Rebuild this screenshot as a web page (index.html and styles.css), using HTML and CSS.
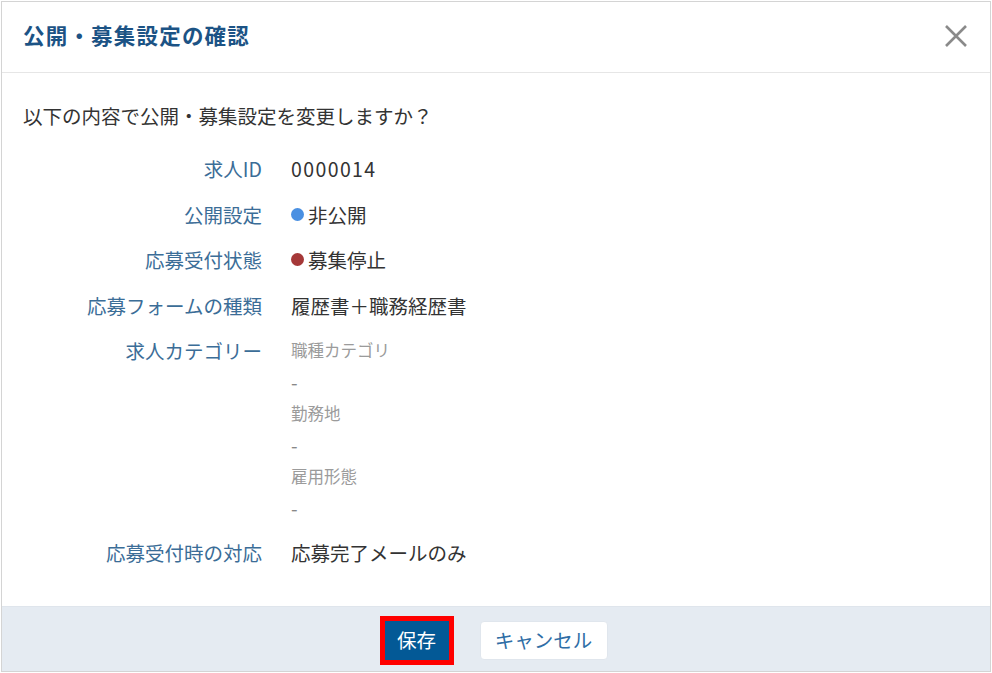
FILE: index.html
```html
<!DOCTYPE html>
<html lang="ja">
<head>
<meta charset="utf-8">
<link rel="stylesheet" href="styles.css">
</head>
<body>
<div class="modal">
  <div class="modal-header">
    <h1 class="title">公開・募集設定の確認</h1>
    <button class="close" aria-label="閉じる">
      <svg width="24" height="24" viewBox="0 0 24 24"><path d="M2 2 L22 22 M22 2 L2 22" stroke="#8a8a8a" stroke-width="2.6" fill="none"/></svg>
    </button>
  </div>
  <div class="modal-body">
    <p class="intro">以下の内容で公開・募集設定を変更しますか？</p>
    <dl class="details">
      <div class="row"><dt>求人ID</dt><dd class="num">0000014</dd></div>
      <div class="row"><dt>公開設定</dt><dd><span class="dot dot-blue"></span>非公開</dd></div>
      <div class="row"><dt>応募受付状態</dt><dd><span class="dot dot-red"></span>募集停止</dd></div>
      <div class="row"><dt>応募フォームの種類</dt><dd>履歴書＋職務経歴書</dd></div>
      <div class="row"><dt>求人カテゴリー</dt><dd class="cats">
        <span class="cat">職種カテゴリ</span>
        <span class="cat dash">-</span>
        <span class="cat">勤務地</span>
        <span class="cat dash">-</span>
        <span class="cat">雇用形態</span>
        <span class="cat dash">-</span>
      </dd></div>
      <div class="row"><dt>応募受付時の対応</dt><dd>応募完了メールのみ</dd></div>
    </dl>
  </div>
  <div class="modal-footer">
    <button class="btn btn-save">保存</button>
    <button class="btn btn-cancel">キャンセル</button>
  </div>
</div>
</body>
</html>
```
FILE: styles.css
```css
* { box-sizing: border-box; }
html, body { margin: 0; padding: 0; background: #fff; }
body { padding: 1px; font-family: "Noto Sans CJK JP", "Noto Sans", sans-serif; }
.modal {
  width: 990px;
  height: 671px;
  border: 1px solid #d4d4d4;
  display: flex;
  flex-direction: column;
  background: #fff;
}
.modal-header {
  height: 71px;
  border-bottom: 1px solid #e6e6e6;
  display: flex;
  align-items: center;
  justify-content: space-between;
  padding: 0 22px 5px 21px;
}
.title {
  margin: 0;
  font-size: 21.5px;
  letter-spacing: 1.2px;
  font-weight: 700;
  color: #1c5385;
  line-height: 1;
}
.close {
  border: 0;
  background: none;
  padding: 0;
  width: 24px;
  height: 24px;
  display: flex;
  margin-top: 3px;
}
.modal-body {
  flex: 1;
  padding: 27px 21px 0 21px;
}
.intro {
  margin: 0 0 22px 0;
  font-size: 19.5px;
  line-height: 31.4px;
  color: #333;
}
.details { margin: 0; display: flex; flex-direction: column; gap: 14px; }
.row { display: grid; grid-template-columns: 240px 1fr; column-gap: 28px; }
dt {
  text-align: right;
  font-size: 19.5px;
  line-height: 31.4px;
  color: #3b6d97;
  padding-right: 1px;
}
dd {
  margin: 0;
  font-size: 19.5px;
  line-height: 31.4px;
  color: #333;
  display: flex;
  align-items: center;
}
.num { letter-spacing: 1.4px; }
.dot { width: 13px; height: 13px; border-radius: 50%; margin-right: 4px; display: inline-block; }
.dot-blue { background: #4a90e2; }
.dot-red { background: #a53838; }
.cats { flex-direction: column; align-items: flex-start; }
.cat { font-size: 16.5px; line-height: 31.4px; color: #9b9b9b; }
.dash { font-size: 19px; color: #888; }
.modal-footer {
  height: 65px;
  border-top: 1px solid #dfe5ec;
  background: #e5ebf2;
  display: flex;
  align-items: center;
  justify-content: center;
  gap: 31px;
  padding-top: 2px;
}
.btn {
  font-family: "Noto Sans CJK JP", "Noto Sans", sans-serif;
  font-size: 19.5px;
  height: 39px;
  line-height: 1;
  padding: 0;
  cursor: pointer;
}
.btn-save {
  width: 64px;
  background: #035996;
  color: #fff;
  border: 0;
  outline: 5px solid #ff0000;
}
.btn-cancel {
  width: 128px;
  background: #fff;
  color: #2f6ea6;
  border: 1px solid #e0e6ed;
  border-radius: 4px;
}
```
